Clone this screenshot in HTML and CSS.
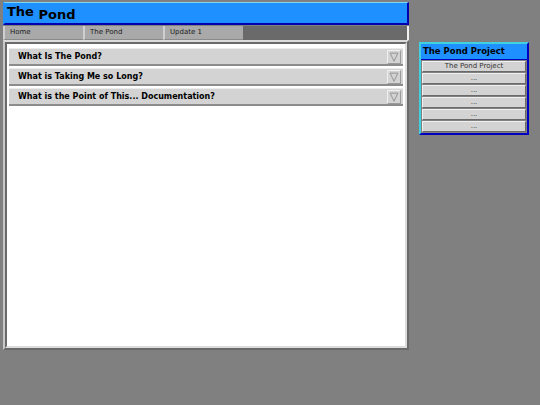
FILE: index.html
```html
<!DOCTYPE html>
<html>
<head>
<meta charset="utf-8">
<title>The Pond</title>
<link rel="stylesheet" href="styles.css">
</head>
<body>
<div class="layout">
  <div class="page">
    <div class="header"><span class="the">The</span> <span class="pond">Pond</span></div>
    <div class="nav">
      <div class="tab">Home</div>
      <div class="tab">The Pond</div>
      <div class="tab">Update 1</div>
    </div>
    <div class="content">
      <div class="inner">
        <div class="item"><span class="item-title">What Is The Pond?</span><span class="toggle"><svg width="14" height="14" viewBox="0 0 14 14"><path d="M2.5 2.5 L11.5 2.5 L7 12 Z" fill="none" stroke="#8a8a8a" stroke-width="1"/></svg></span></div>
        <div class="item"><span class="item-title">What is Taking Me so Long?</span><span class="toggle"><svg width="14" height="14" viewBox="0 0 14 14"><path d="M2.5 2.5 L11.5 2.5 L7 12 Z" fill="none" stroke="#8a8a8a" stroke-width="1"/></svg></span></div>
        <div class="item"><span class="item-title">What is the Point of This... Documentation?</span><span class="toggle"><svg width="14" height="14" viewBox="0 0 14 14"><path d="M2.5 2.5 L11.5 2.5 L7 12 Z" fill="none" stroke="#8a8a8a" stroke-width="1"/></svg></span></div>
      </div>
    </div>
  </div>
  <div class="sidebar">
    <div class="side-head">The Pond Project</div>
    <div class="side-btn">The Pond Project</div>
    <div class="side-btn">...</div>
    <div class="side-btn">...</div>
    <div class="side-btn">...</div>
    <div class="side-btn">...</div>
    <div class="side-btn">...</div>
  </div>
</div>
</body>
</html>
```
FILE: styles.css
```css
html, body {
  margin: 0;
  padding: 0;
  background: #808080;
  font-family: "DejaVu Sans", Verdana, sans-serif;
}
.layout {
  display: flex;
  align-items: flex-start;
  padding: 2px 0 0 3px;
  gap: 10px;
}
.page {
  width: 406px;
  display: flex;
  flex-direction: column;
}
.header {
  height: 20px;
  background: #1e90ff;
  border: 2px solid;
  border-color: #7fd8f0 #0000b0 #0000b0 #1e90ff;
  border-top-width: 1px;
  padding-left: 2px;
  font-weight: bold;
  font-size: 13px;
  line-height: 20px;
  color: #000;
  white-space: nowrap;
}
.header .the {
  position: relative;
  top: -1px;
}
.header .pond {
  position: relative;
  top: 2px;
}
.nav {
  height: 14px;
  background: #6a6a6a;
  display: flex;
  border-right: 2px solid #f0f0f0;
  margin-top: 1px;
}
.tab {
  background: #a9a9a9;
  border-left: 2px solid #cfcfcf;
  border-bottom: 1px solid #8a8a8a;
  font-size: 7px;
  line-height: 13px;
  padding-left: 5px;
  box-sizing: border-box;
  width: 80px;
  color: #222;
}
.content {
  border: 2px solid;
  border-color: #dcdcdc #6a6a6a #6a6a6a #c8c8c8;
}
.inner {
  border: 2px solid;
  border-color: #6a6a6a #dcdcdc #dcdcdc #6a6a6a;
  background: #fff;
  height: 298px;
  padding: 4px 2px 0 2px;
  display: flex;
  flex-direction: column;
  gap: 2px;
}
.item {
  height: 15px;
  background: #d3d3d3;
  border-top: 1px solid #ececec;
  border-bottom: 2px solid #8c8c8c;
  display: flex;
  align-items: center;
  justify-content: space-between;
  padding-left: 9px;
  padding-right: 2px;
}
.item-title {
  font-weight: bold;
  font-size: 8px;
  color: #000;
}
.toggle {
  width: 14px;
  height: 14px;
  box-sizing: border-box;
  border: 1px solid;
  border-color: #f0f0f0 #9a9a9a #9a9a9a #f0f0f0;
  display: flex;
  align-items: center;
  justify-content: center;
  background: #d3d3d3;
}
.toggle svg {
  display: block;
  width: 12px;
  height: 12px;
}
.sidebar {
  margin-top: 40px;
  width: 106px;
  border: 2px solid;
  border-color: #40d0e0 #0000c0 #0000c0 #40d0e0;
  background: #808080;
  display: flex;
  flex-direction: column;
  gap: 1px;
  padding-bottom: 1px;
}
.side-head {
  background: #1e90ff;
  font-weight: bold;
  font-size: 8.5px;
  height: 15px;
  line-height: 15px;
  padding-left: 2px;
  color: #000;
  border-bottom: 1px solid #0000c0;
}
.side-btn {
  height: 9px;
  background: #d3d3d3;
  border-top: 1px solid #f0f0f0;
  border-left: 1px solid #f0f0f0;
  border-bottom: 1px solid #6a6a6a;
  border-right: 1px solid #6a6a6a;
  margin: 0 1px;
  font-size: 7px;
  line-height: 9px;
  text-align: center;
  color: #333;
}
```
